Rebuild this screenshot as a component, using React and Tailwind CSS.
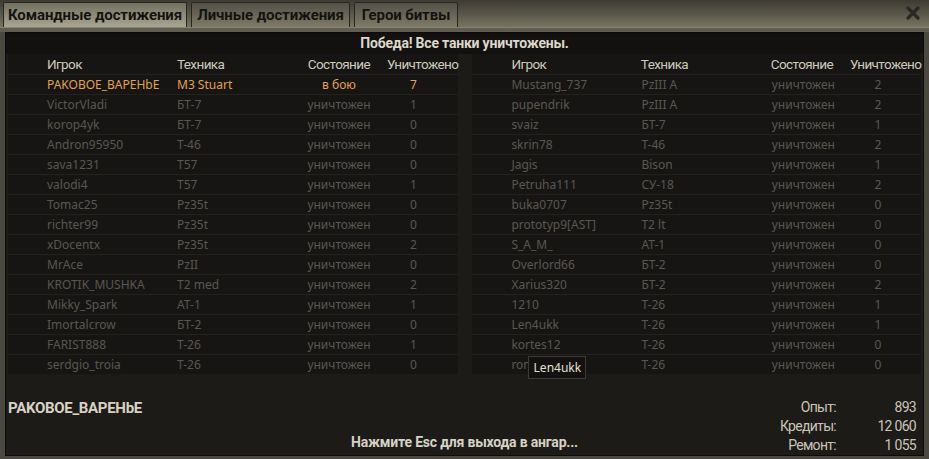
import React from "react";

const COND = "font-['Roboto',sans-serif]";
const BODY = "font-['Noto_Sans',sans-serif]";

const left = [
  ["PAKOBOE_BAPEHbE", "M3 Stuart", "в бою", "7", true],
  ["VictorVladi", "БТ-7", "уничтожен", "1"],
  ["korop4yk", "БТ-7", "уничтожен", "0"],
  ["Andron95950", "Т-46", "уничтожен", "0"],
  ["sava1231", "T57", "уничтожен", "0"],
  ["valodi4", "T57", "уничтожен", "1"],
  ["Tomac25", "Pz35t", "уничтожен", "0"],
  ["richter99", "Pz35t", "уничтожен", "0"],
  ["xDocentx", "Pz35t", "уничтожен", "2"],
  ["MrAce", "PzII", "уничтожен", "0"],
  ["KROTIK_MUSHKA", "T2 med", "уничтожен", "2"],
  ["Mikky_Spark", "AT-1", "уничтожен", "1"],
  ["Imortalcrow", "БТ-2", "уничтожен", "0"],
  ["FARIST888", "Т-26", "уничтожен", "1"],
  ["serdgio_troia", "Т-26", "уничтожен", "0"],
];

const right = [
  ["Mustang_737", "PzIII A", "уничтожен", "2"],
  ["pupendrik", "PzIII A", "уничтожен", "2"],
  ["svaiz", "БТ-7", "уничтожен", "1"],
  ["skrin78", "Т-46", "уничтожен", "2"],
  ["Jagis", "Bison", "уничтожен", "1"],
  ["Petruha111", "СУ-18", "уничтожен", "2"],
  ["buka0707", "Pz35t", "уничтожен", "0"],
  ["prototyp9[AST]", "T2 lt", "уничтожен", "0"],
  ["S_A_M_", "AT-1", "уничтожен", "0"],
  ["Overlord66", "БТ-2", "уничтожен", "0"],
  ["Xarius320", "БТ-2", "уничтожен", "2"],
  ["1210", "Т-26", "уничтожен", "1"],
  ["Len4ukk", "Т-26", "уничтожен", "1"],
  ["kortes12", "Т-26", "уничтожен", "0"],
  ["ronaldo7", "Т-26", "уничтожен", "0"],
];

function Table({ rows, width, tooltip }) {
  return (
    <div className={`flex flex-col ${width}`}>
      <div className={`flex items-center h-[20px] bg-[#161513] text-[13.5px] tracking-[-0.6px] text-[#cdc9bc] whitespace-nowrap ${COND}`}>
        <div className="pl-[39px] w-[169px]">Игрок</div>
        <div className="w-[100px]">Техника</div>
        <div className="w-[93px] text-right">Состояние</div>
        <div className="pl-[17px]">Уничтожено</div>
      </div>
      {rows.map(([n, t, s, c, me], i) => (
        <div
          key={i}
          className={`relative flex items-center h-[20px] border-t border-[#24221e] bg-[#161513] text-[12px] leading-none ${BODY} ${
            me ? "text-[#e3a24c]" : "text-[#5a5751]"
          }`}
        >
          <div className="pl-[39px] w-[169px] whitespace-nowrap">{n}</div>
          <div className="w-[100px] whitespace-nowrap">{t}</div>
          <div className="w-[124px] text-center">{s}</div>
          <div className="pl-[9px]">{c}</div>
          {tooltip && i === rows.length - 1 && (
            <div className="absolute z-10 top-[1px] left-[56px] w-[58px] h-[23px] flex items-center justify-center bg-[#131210] border border-[#3c3a35] text-[#e4e0d4] text-[12px]">
              Len4ukk
            </div>
          )}
        </div>
      ))}
    </div>
  );
}

function Tab({ children, active, w }) {
  return (
    <div
      className={`${w} h-[25px] mt-[2px] flex items-center justify-center whitespace-nowrap rounded-t-[2px] border border-b-0 border-[#26251f] text-[15px] font-bold tracking-[-0.1px] text-[#14130f] ${COND} ${
        active
          ? "bg-gradient-to-b from-[#727061] to-[#a8a591]"
          : "bg-gradient-to-b from-[#535147] to-[#7e7b69]"
      }`}
    >
      {children}
    </div>
  );
}

export default function App() {
  return (
    <div className="w-[929px] h-[459px] bg-[#4b493f] flex flex-col overflow-hidden">
      <div className="h-[32px] flex flex-col">
        <div className="h-[27px] flex items-start gap-[4px] pl-[3px] pr-[8px] bg-gradient-to-b from-[#3d3b32] to-[#777462]">
          <Tab active w="w-[184px]">Командные достижения</Tab>
          <Tab w="w-[159px]">Личные достижения</Tab>
          <Tab w="w-[104px]">Герои битвы</Tab>
          <div className="flex-1" />
          <svg width="16" height="16" viewBox="0 0 16 16" className="mt-[5px]">
            <path d="M3 3 L13 13 M13 3 L3 13" stroke="#2a2924" strokeWidth="3.4" strokeLinecap="round" />
          </svg>
        </div>
        <div className="h-[5px] bg-[#5f5d50] border-t border-[#868371]" />
      </div>
      <div className="mx-[5px] mb-[4px] flex-1 flex flex-col border border-[#0c0b0a] bg-[#1d1b18]">
        <div className={`h-[21px] flex items-center justify-center bg-[#121110] text-[14px] font-bold tracking-[-0.2px] text-[#dcd8c9] ${COND}`}>
          Победа! Все танки уничтожены.
        </div>
        <div className="flex px-[2px] gap-[14px]">
          <Table rows={left} width="w-[451px]" />
          <Table rows={right} width="w-[449px]" tooltip />
        </div>
        <div className="flex-1 grid grid-cols-[1fr_auto_1fr] px-[2px]">
          <div className={`pt-[25px] text-[15px] font-bold leading-[18px] tracking-[-0.3px] text-[#d6d2c4] ${COND}`}>PAKOBOE_BAPEHbE</div>
          <div className={`self-end pb-[4px] text-[14px] font-bold leading-[18px] tracking-[-0.2px] text-[#d6d2c4] ${COND}`}>
            Нажмите Esc для выхода в ангар...
          </div>
          <div className={`justify-self-end pt-[24px] pr-[5px] grid grid-cols-[auto_80px] text-[14px] leading-[19px] tracking-[-0.7px] text-[#c9c5b7] ${COND}`}>
            <div className="text-right">Опыт:</div>
            <div className="text-right">893</div>
            <div className="text-right">Кредиты:</div>
            <div className="text-right">12 060</div>
            <div className="text-right">Ремонт:</div>
            <div className="text-right">1 055</div>
          </div>
        </div>
      </div>
    </div>
  );
}
